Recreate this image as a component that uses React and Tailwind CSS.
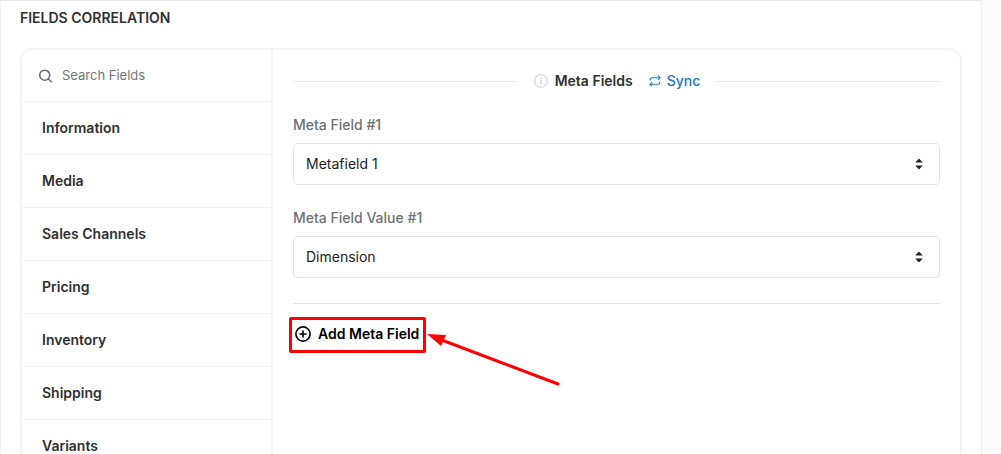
const SECTIONS = [
  'Information',
  'Media',
  'Sales Channels',
  'Pricing',
  'Inventory',
  'Shipping',
  'Variants',
]

function SearchIcon() {
  return (
    <svg className="h-4 w-4 shrink-0 text-[#6d7175]" viewBox="0 0 16 16" fill="none" stroke="currentColor" strokeWidth="1.6">
      <circle cx="6.7" cy="7.2" r="5" />
      <path d="m10.3 10.8 3.4 3.4" />
    </svg>
  )
}

function InfoIcon() {
  return (
    <svg className="h-4 w-4 shrink-0 text-[#dcdfe3]" viewBox="0 0 16 16" fill="none" stroke="currentColor" strokeWidth="1.6">
      <circle cx="8" cy="8" r="6.3" />
      <path d="M8 7.2v4.2" strokeWidth="2" />
      <path d="M8 4.4v1.8" strokeWidth="2" />
    </svg>
  )
}

function SyncIcon() {
  return (
    <svg className="h-3 w-3 shrink-0" viewBox="0 0 12 12" fill="none" stroke="currentColor" strokeWidth="1.1" strokeLinejoin="round">
      <path d="M1.2 5.6V4.2a1.5 1.5 0 0 1 1.5-1.5h8" />
      <path d="M9 .6l2.1 2.1L9 4.8" />
      <path d="M10.8 6.4v1.4a1.5 1.5 0 0 1-1.5 1.5h-8" />
      <path d="M3 7.2.9 9.3 3 11.4" />
    </svg>
  )
}

function PlusIcon() {
  return (
    <svg className="h-4 w-4 shrink-0" viewBox="0 0 16 16" fill="none" stroke="currentColor" strokeWidth="1.6">
      <circle cx="8" cy="8" r="7.1" />
      <path d="M8 4.4v7.2M4.4 8h7.2" />
    </svg>
  )
}

function SelectField({ id, label, value }) {
  return (
    <div className="flex flex-col gap-2">
      <label htmlFor={id} className="text-sm font-medium text-[#6d7175]">
        {label}
      </label>
      <div className="relative">
        <select
          id={id}
          defaultValue={value}
          className="block h-[42px] w-full appearance-none rounded border border-[#e1e3e5] bg-white px-3 text-sm text-[#202223]"
        >
          <option value={value}>{value}</option>
        </select>
        <svg className="pointer-events-none absolute top-[15px] right-[17px] h-3 w-2 text-[#202223]" viewBox="0 0 8 12" fill="currentColor">
          <path d="M.2 4.6h7.6L4.5 1a.7.7 0 0 0-1 0z" />
          <path d="M.2 7.4h7.6L4.5 11a.7.7 0 0 1-1 0z" />
        </svg>
      </div>
    </div>
  )
}

function Sidebar() {
  return (
    <nav className="w-[251px] shrink-0 border-r-2 border-[#f4f4f5]">
      <label className="flex h-[52px] items-center gap-2 border-b border-[#f1f1f1] px-4">
        <SearchIcon />
        <input
          type="text"
          aria-label="Search Fields"
          placeholder="Search Fields"
          className="min-w-0 flex-1 bg-transparent text-[13px] outline-none placeholder:text-[#757575]"
        />
      </label>
      <ul>
        {SECTIONS.map((section) => (
          <li key={section} className="border-b border-[#f1f1f1]">
            <button type="button" className="flex h-[52px] w-full items-center px-5 text-sm font-semibold text-[#303030]">
              {section}
            </button>
          </li>
        ))}
      </ul>
    </nav>
  )
}

function AddMetaField() {
  return (
    <div className="relative -ml-1 inline-flex rounded-xs border-3 border-[#ff0000]">
      <button type="button" className="flex h-[30px] items-center gap-[7px] pr-1 pb-0.5 pl-[3px] text-sm font-semibold text-black">
        <PlusIcon />
        Add Meta Field
      </button>
      {/* pointer to the highlighted button */}
      <svg
        aria-hidden="true"
        className="pointer-events-none absolute top-3 left-full ml-1 h-14 w-[134px] text-[#ff0000]"
        viewBox="0 0 134 56"
        fill="currentColor"
      >
        <path d="M12 7 131 52" stroke="currentColor" strokeWidth="3" strokeLinecap="round" />
        <path d="M0 2 19 3 14 14z" />
      </svg>
    </div>
  )
}

function App() {
  return (
    <div className="h-screen overflow-hidden bg-[#fcfcfc] pr-[19px] font-['Inter',sans-serif]">
      <main className="min-h-full border border-[#f1f1f1] border-t-[#e8e8e8] bg-white px-[19px] pt-[7px]">
        <h1 className="text-sm font-semibold text-[#303030]">FIELDS CORRELATION</h1>

        <div className="mt-5 flex overflow-hidden rounded-xl border-2 border-[#f4f4f5]">
          <Sidebar />
          <section className="min-w-0 flex-1 px-5 pt-[21px]">
            <div className="flex items-center gap-4">
              <span className="h-px flex-1 bg-[#ebebeb]" />
              <div className="flex items-center gap-4">
                <h2 className="flex items-center gap-1.5 text-sm font-semibold text-[#303030]">
                  <InfoIcon />
                  Meta Fields
                </h2>
                <a href="#sync" className="flex items-center gap-1.5 text-sm font-medium text-[#1878b9]">
                  <SyncIcon />
                  Sync
                </a>
              </div>
              <span className="h-px flex-1 bg-[#ebebeb]" />
            </div>

            <div className="mt-6 flex flex-col gap-[23px] border-b border-[#e1e3e5] pb-[25px]">
              <SelectField id="meta-field" label="Meta Field #1" value="Metafield 1" />
              <SelectField id="meta-field-value" label="Meta Field Value #1" value="Dimension" />
            </div>

            <div className="pt-[13px]">
              <AddMetaField />
            </div>
          </section>
        </div>
      </main>
    </div>
  )
}

export default App
